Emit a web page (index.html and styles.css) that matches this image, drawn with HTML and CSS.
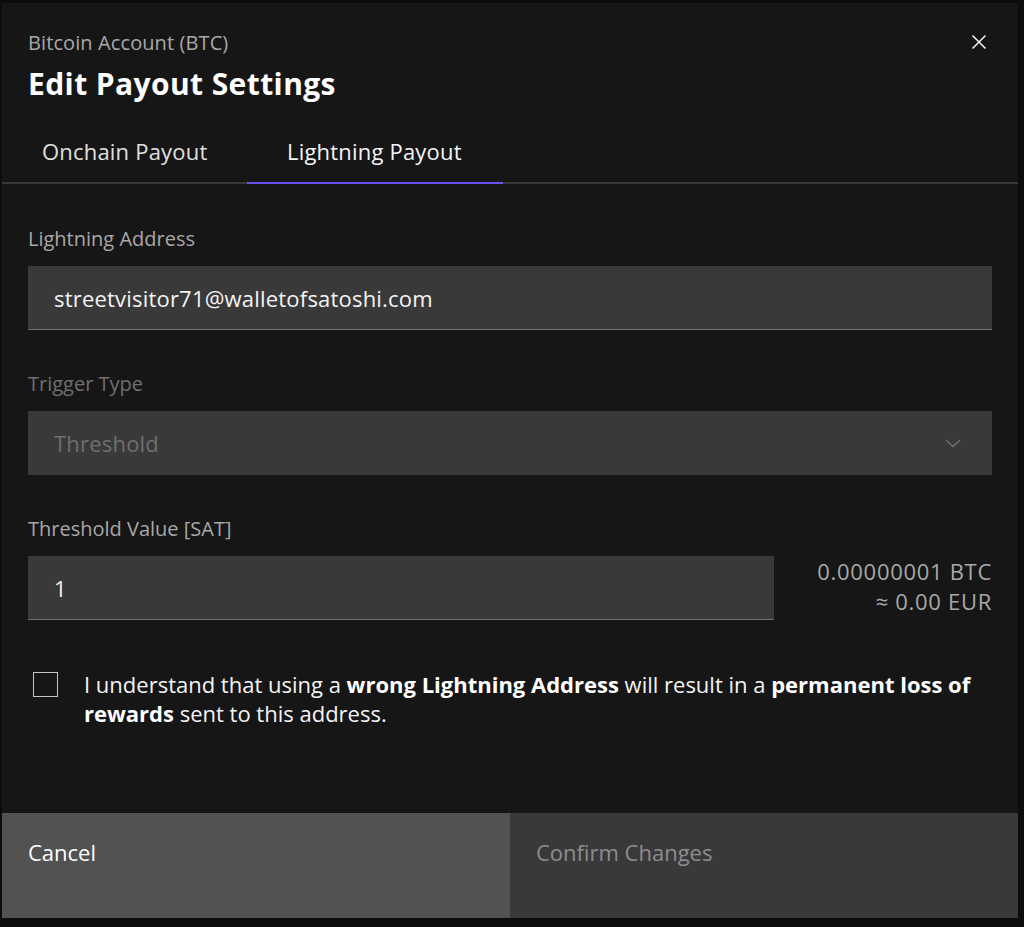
FILE: index.html
```html
<!DOCTYPE html>
<html lang="en">
<head>
<meta charset="utf-8">
<title>Edit Payout Settings</title>
<link rel="stylesheet" href="styles.css">
</head>
<body>
<div class="modal">
  <header class="modal-header">
    <div class="subtitle">Bitcoin Account (BTC)</div>
    <h1 class="title">Edit Payout Settings</h1>
    <button class="close" aria-label="Close">
      <svg width="16" height="16" viewBox="0 0 16 16" fill="none" stroke="#f4f4f4" stroke-width="1.5"><path d="M1.5 1.5 L14.5 14.5 M14.5 1.5 L1.5 14.5"/></svg>
    </button>
  </header>
  <nav class="tabs">
    <div class="tab tab-first">Onchain Payout</div>
    <div class="tab tab-active">Lightning Payout</div>
  </nav>
  <section class="body">
    <div class="field">
      <label class="label">Lightning Address</label>
      <div class="input">streetvisitor71@walletofsatoshi.com</div>
    </div>
    <div class="field">
      <label class="label label-disabled">Trigger Type</label>
      <div class="input select-disabled">
        <span>Threshold</span>
        <svg class="chevron" width="16" height="16" viewBox="0 0 16 16" fill="none" stroke="#6f6f6f" stroke-width="1.3"><path d="M1 5 L8 11.5 L15 5"/></svg>
      </div>
    </div>
    <div class="field">
      <label class="label">Threshold Value [SAT]</label>
      <div class="row">
        <div class="input input-short">1</div>
        <div class="conversion">
          <div>0.00000001 BTC</div>
          <div>≈ 0.00 EUR</div>
        </div>
      </div>
    </div>
    <div class="consent">
      <span class="checkbox"></span>
      <p class="consent-text">I understand that using a <b>wrong Lightning Address</b> will result in a <b>permanent loss of</b> <b>rewards</b> sent to this address.</p>
    </div>
  </section>
  <footer class="footer">
    <button class="btn btn-secondary">Cancel</button>
    <button class="btn btn-disabled">Confirm Changes</button>
  </footer>
</div>
</body>
</html>
```
FILE: styles.css
```css
* { box-sizing: border-box; }
html, body { margin: 0; padding: 0; }
body {
  background: #0c0c0c;
  width: 1024px;
  height: 927px;
  overflow: hidden;
  font-family: "Open Sans", "Liberation Sans", sans-serif;
  color: #f4f4f4;
}
.modal {
  margin: 3px 0 0 2px;
  width: 1016px;
  height: 915px;
  background: #161616;
  display: flex;
  flex-direction: column;
}
.modal-header {
  position: relative;
  padding: 30px 26px 0 26px;
}
.subtitle {
  font-size: 20px;
  line-height: 20px;
  letter-spacing: 0.1px;
  color: #a8a8a8;
}
.title {
  margin: 12px 0 0 0;
  font-size: 30px;
  line-height: 38px;
  font-weight: 700;
  letter-spacing: 0.4px;
  color: #ffffff;
}
.close {
  position: absolute;
  top: 31px;
  right: 31px;
  width: 16px;
  height: 16px;
  padding: 0;
  border: 0;
  background: none;
  display: flex;
}
.tabs {
  margin-top: 17px;
  display: flex;
  border-bottom: 2px solid #393939;
}
.tab {
  flex: none;
  height: 64px;
  margin-bottom: -2px;
  padding: 0 40px;
  display: flex;
  align-items: center;
  white-space: nowrap;
  font-size: 22px;
  letter-spacing: 0.2px;
  color: #e0e0e0;
  border-bottom: 2px solid transparent;
}
.tab-first { width: 245px; }
.tab-active {
  width: 256px;
  color: #f4f4f4;
  border-bottom-color: #6b4ff0;
}
.body {
  padding: 45px 26px 0 26px;
  flex: 1;
  display: flex;
  flex-direction: column;
  gap: 44px;
}
.field {
  display: flex;
  flex-direction: column;
  gap: 17px;
}
.label {
  font-size: 20px;
  line-height: 20px;
  color: #a8a8a8;
}
.label-disabled { color: #6f6f6f; }
.input {
  height: 64px;
  background: #393939;
  border-bottom: 1px solid #6f6f6f;
  padding: 0 26px;
  display: flex;
  align-items: center;
  font-size: 22px;
  letter-spacing: 0.2px;
  color: #f4f4f4;
}
.select-disabled {
  border-bottom-color: #393939;
  color: #6f6f6f;
  justify-content: space-between;
  padding-right: 31px;
}
.row {
  display: flex;
  align-items: flex-start;
}
.input-short { width: 746px; }
.conversion {
  flex: 1;
  text-align: right;
  font-size: 22px;
  letter-spacing: 0.7px;
  line-height: 30px;
  color: #a8a8a8;
}
.consent {
  margin-top: 6px;
  display: flex;
  align-items: flex-start;
  padding-left: 5px;
}
.checkbox {
  flex: none;
  width: 25px;
  height: 25px;
  margin-top: 2px;
  border: 1.5px solid #c6c6c6;
}
.consent-text {
  margin: 0 0 0 26px;
  font-size: 22px;
  line-height: 29px;
  color: #f4f4f4;
}
.consent-text b { font-weight: 700; color: #ffffff; }
.footer {
  display: flex;
  height: 105px;
}
.btn {
  flex: 1;
  border: 0;
  margin: 0;
  font-family: inherit;
  font-size: 22px;
  text-align: left;
  padding: 0 26px 28px 26px;
  display: flex;
  align-items: center;
}
.btn-secondary { background: #525252; color: #ffffff; }
.btn-disabled { background: #393939; color: #8d8d8d; }
```
